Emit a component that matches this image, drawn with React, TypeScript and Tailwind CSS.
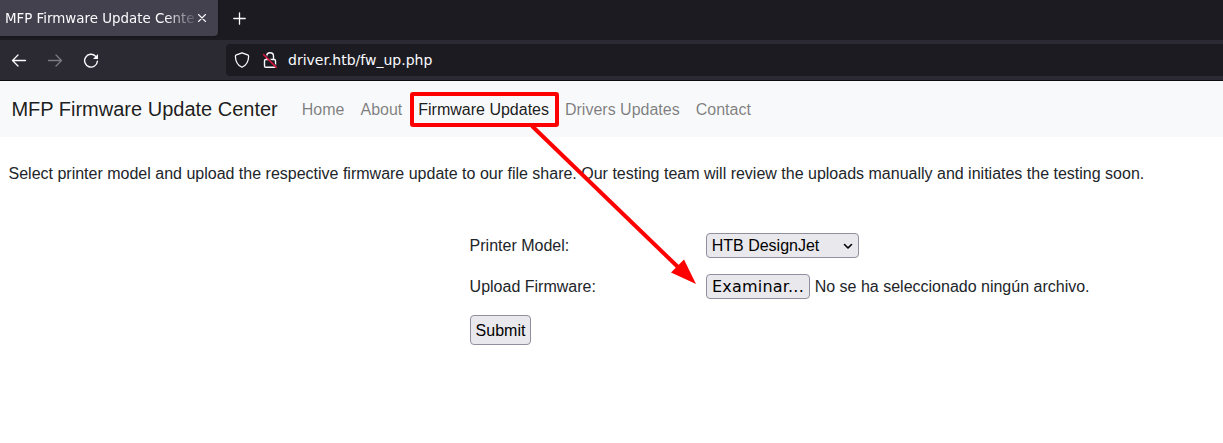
const navLinks = [
  { label: "Home", active: false },
  { label: "About", active: false },
  { label: "Firmware Updates", active: true },
  { label: "Drivers Updates", active: false },
  { label: "Contact", active: false },
];

function TabBar() {
  return (
    <div className="flex h-10 items-start bg-[#1c1b22] font-['DejaVu_Sans',sans-serif] text-[#fbfbfe]">
      <div className="flex h-9 w-[218px] items-center rounded-br bg-[#42414d] pl-[5px] shadow-[0_0_3px_rgba(0,0,0,0.5)]">
        <span className="w-[190px] overflow-hidden whitespace-nowrap pt-[2px] text-[13.4px] [mask-image:linear-gradient(to_right,black_160px,transparent_194px)]">
          MFP Firmware Update Center
        </span>
        <svg className="ml-[3px] h-2 w-2 shrink-0" viewBox="0 0 8 8" fill="none" stroke="#fbfbfe" strokeWidth="1.1" strokeLinecap="round">
          <path d="M.5.5l7 7M7.5.5l-7 7" />
        </svg>
      </div>
      <svg className="ml-[15px] mt-[12px] h-[13px] w-[13px]" viewBox="0 0 13 13" fill="none" stroke="#fbfbfe" strokeWidth="1.3" strokeLinecap="round">
        <path d="M6.5.8v11.4M.8 6.5h11.4" />
      </svg>
    </div>
  );
}

function Toolbar() {
  return (
    <div className="flex h-[41px] items-center border-b border-[#0c0c0d] bg-[#2b2a33]">
      <div className="flex w-[226px] shrink-0 items-center pl-[11px]">
        <svg className="h-4 w-4" viewBox="0 0 16 16" fill="none" stroke="#fbfbfe" strokeWidth="1.3" strokeLinecap="round" strokeLinejoin="round">
          <path d="M14.5 8.5H1.7M7 3L1.5 8.5L7 14" />
        </svg>
        <svg className="ml-5 h-4 w-4" viewBox="0 0 16 16" fill="none" stroke="#7c7b82" strokeWidth="1.3" strokeLinecap="round" strokeLinejoin="round">
          <path d="M1.5 8.5h12.8M9 3l5.5 5.5L9 14" />
        </svg>
        <svg className="ml-5 h-4 w-4" viewBox="0 0 16 16" fill="none" stroke="#fbfbfe" strokeWidth="1.4" strokeLinecap="round">
          <path d="M12.6 4.2A6.4 6.4 0 1 0 14.4 9.2" />
          <path d="M15 2v5h-5z" fill="#fbfbfe" stroke="none" />
        </svg>
      </div>
      <div className="flex h-8 flex-1 items-center rounded-l bg-[#1c1b22] pl-2">
        <svg className="h-4 w-4" viewBox="0 0 16 16" fill="none" stroke="#fbfbfe" strokeWidth="1.25" strokeLinejoin="round">
          <path d="M8 .8L13.6 2.9Q14.7 3.3 14.6 4.5C14.5 9.2 12.2 13.4 8 15.3C3.8 13.4 1.5 9.2 1.4 4.5Q1.3 3.3 2.4 2.9Z" />
        </svg>
        <svg className="ml-3 h-4 w-4" viewBox="0 0 16 16" fill="none" stroke="#fbfbfe" strokeWidth="1.4">
          <path d="M4.7 7.5V4.1a3.4 3.4 0 0 1 6.8 0v3.4" />
          <rect x="2.5" y="7.5" width="11" height="7.7" rx="1.3" />
          <path d="M2.2 1.9L15.2 14.9" stroke="#1c1b22" strokeWidth="1.2" />
          <path d="M1.2 2.3L14.7 15.8" stroke="#e2143f" strokeWidth="1.5" />
        </svg>
        <span className="ml-[10px] font-['DejaVu_Sans',sans-serif] text-[14px] leading-4 text-[#fbfbfe]">driver.htb/fw_up.php</span>
      </div>
    </div>
  );
}

function Navbar() {
  return (
    <nav className="flex h-14 items-center bg-[#f8f9fa] pl-[11.4px]">
      <span className="mr-4 text-xl leading-[30px] text-black/90">MFP Firmware Update Center</span>
      {navLinks.map((link) => (
        <a key={link.label} className={link.active ? "px-2 pt-[2px] text-black/90" : "px-2 pt-[2px] text-black/50"}>
          {link.label}
        </a>
      ))}
    </nav>
  );
}

export default function App() {
  return (
    <div className="relative h-[443px] w-[1223px] overflow-hidden bg-white font-['Liberation_Sans',Arial,sans-serif] text-base text-[#212529]">
      <TabBar />
      <Toolbar />
      <Navbar />
      <p className="mt-[25px] pl-[8.5px]">
        Select printer model and upload the respective firmware update to our file share. Our testing team will review the uploads manually and initiates the testing soon.
      </p>
      <form className="ml-[469.6px] mt-[47px] grid grid-cols-[236.4px_1fr] gap-y-4">
        <label className="flex h-[25px] items-center">Printer Model:</label>
        <button type="button" className="flex h-[25px] w-[153px] items-center justify-between rounded border border-[#8f8f9d] bg-[#e9e9ed] pl-[5px] pr-[5px] text-black">
          <span className="-ml-[0.3px]">HTB DesignJet</span>
          <svg className="h-[10px] w-[10px]" viewBox="0 0 10 10" fill="none" stroke="black" strokeWidth="1.6" strokeLinecap="round" strokeLinejoin="round">
            <path d="M1.5 3.5L5 7l3.5-3.5" />
          </svg>
        </button>
        <label className="flex h-[25px] items-center">Upload Firmware:</label>
        <div className="flex h-[25px] items-center">
          <button type="button" className="mr-[5px] flex h-[25px] w-[104px] items-center justify-center rounded border border-[#8f8f9d] bg-[#e9e9ed] font-['DejaVu_Sans',sans-serif] tracking-[0.2px] text-black">
            Examinar...
          </button>
          <span className="-ml-[0.3px]">No se ha seleccionado ningún archivo.</span>
        </div>
        <button type="button" className="ml-[0.4px] flex h-[30px] w-[61px] items-center justify-center rounded border border-[#8f8f9d] bg-[#e9e9ed] pt-[2px] text-black">
          Submit
        </button>
      </form>
      <svg className="pointer-events-none absolute left-0 top-0" width="1223" height="443" viewBox="0 0 1223 443">
        <rect x="412" y="94" width="145" height="31" rx="1" fill="none" stroke="#ff0000" strokeWidth="4" strokeLinejoin="round" />
        <path d="M532 126L680 269" stroke="#ff0000" strokeWidth="4" />
        <path d="M696 284L684 259.5L671 272.5Z" fill="#ff0000" />
      </svg>
    </div>
  );
}
